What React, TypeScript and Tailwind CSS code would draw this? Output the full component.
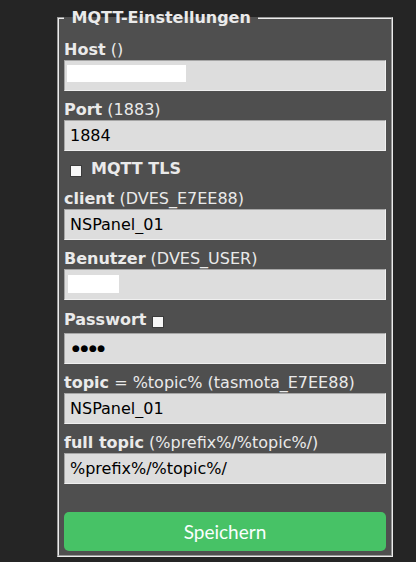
import React from 'react';

interface FieldProps {
  label: string;
  hint: string;
  value: string;
  mask?: string;
}

const inputCls =
  "block w-full h-[31px] px-[5px] bg-[#dddddd] text-black text-[16px] leading-[19px] outline-none border border-t-[#a6a6a6] border-l-[#a6a6a6] border-r-[#efefef] border-b-[#efefef] font-['DejaVu_Sans',Verdana,sans-serif]";

const Check = () => (
  <span className="mt-[6px] w-[12px] h-[12px] shrink-0 bg-[#f7f7f7] border border-[#3c3c3c]" />
);

const Field: React.FC<FieldProps & { first?: boolean }> = ({ label, hint, value, mask, first }) => (
  <div className={first ? '' : 'mt-[9px]'}>
    <div className="h-[20px] leading-[20px] whitespace-nowrap">
      <b>{label}</b>
      {hint}
    </div>
    <div className="relative">
      <input className={inputCls} readOnly value={value} />
      {mask && <span className={`absolute top-[5px] left-[3px] h-[17px] bg-white ${mask}`} />}
    </div>
  </div>
);

export default function App() {
  return (
    <div className="min-h-screen bg-[#252525] pt-[8px] text-[16px] text-[#eaeaea] font-['DejaVu_Sans',Verdana,sans-serif]">
      <fieldset className="ml-[57px] w-[336px] border-2 [border-style:groove] border-[#ececec] bg-[#4f4f4f] px-[5px] pt-[12px] pb-[4px]">
        <legend className="px-[2px] font-bold leading-[20px]">{'\u00a0'}MQTT-Einstellungen{'\u00a0'}</legend>

        <Field first label="Host" hint=" ()" value="" mask="w-[119px]" />
        <Field label="Port" hint=" (1883)" value="1884" />

        <div className="mt-[8px] mb-[10px] h-[20px] leading-[20px] flex items-start">
          <span className="ml-[6px] flex"><Check /></span>
          <b className="ml-[9px]">MQTT TLS</b>
        </div>

        <Field first label="client" hint=" (DVES_E7EE88)" value="NSPanel_01" />
        <Field label="Benutzer" hint=" (DVES_USER)" value="" mask="w-[51px] top-[6px] h-[18px] left-[4px]" />

        <div className="mt-[10px]">
          <div className="h-[23px] leading-[20px] flex items-start whitespace-nowrap">
            <b>Passwort</b>
            <span className="ml-[6px] flex"><Check /></span>
          </div>
          <div className="h-[31px] px-[7px] flex items-center bg-[#dddddd] text-black border border-t-[#a6a6a6] border-l-[#a6a6a6] border-r-[#efefef] border-b-[#efefef]">
            <span className="text-[9px] leading-none tracking-[0.6px]">●●●●</span>
          </div>
        </div>

        <Field label="topic" hint=" = %topic% (tasmota_E7EE88)" value="NSPanel_01" />
        <Field label="full topic" hint=" (%prefix%/%topic%/)" value="%prefix%/%topic%/" />

        <button className="mt-[28px] block w-full h-[39px] rounded-[5px] bg-[#47c266] text-[#faffff] text-[19px] leading-[39px] font-['Lato','Open_Sans',sans-serif]">
          Speichern
        </button>
      </fieldset>
    </div>
  );
}
